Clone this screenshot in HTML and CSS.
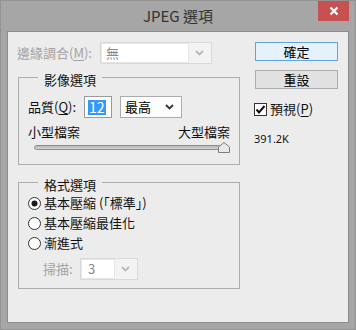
FILE: index.html
```html
<!DOCTYPE html>
<html lang="zh-Hant">
<head>
    <meta charset="UTF-8">
    <title>JPEG 選項</title>
    <link rel="stylesheet" href="styles.css">
</head>
<body>
    <div class="window">
        <div class="titlebar">
            <span class="title">JPEG 選項</span>
            <div class="close">
                <svg width="10" height="10" viewBox="0 0 10 10"><path d="M1.5 1.5 L8.5 8.5 M8.5 1.5 L1.5 8.5" stroke="#fff" stroke-width="2.2"/></svg>
            </div>
        </div>

        <div class="client">
            <!-- columna izquierda -->
            <div class="main">
                <div class="matte-row">
                    <span class="label disabled">邊緣調合(<u>M</u>):</span>
                    <div class="select off matte">
                        <span class="field">無</span>
                        <svg class="chev" width="9" height="6" viewBox="0 0 9 6"><path d="M1 1 L4.5 4.5 L8 1" fill="none" stroke="#b9b9b9" stroke-width="1.8"/></svg>
                    </div>
                </div>

                <fieldset class="group image">
                    <legend>影像選項</legend>
                    <div class="quality-row">
                        <span class="label q-label">品質(<u>Q</u>):</span>
                        <div class="num"><span class="sel">12</span></div>
                        <div class="select on quality">
                            <span class="field">最高</span>
                            <svg class="chev" width="9" height="6" viewBox="0 0 9 6"><path d="M1 1 L4.5 4.5 L8 1" fill="none" stroke="#333" stroke-width="1.8"/></svg>
                        </div>
                    </div>
                    <div class="size-labels">
                        <span>小型檔案</span>
                        <span>大型檔案</span>
                    </div>
                    <div class="slider">
                        <div class="track"></div>
                        <svg class="thumb" width="12" height="11" viewBox="0 0 12 11"><path d="M0.5 10.5 L0.5 5 L6 0.5 L11.5 5 L11.5 10.5 Z" fill="#e8e8e8" stroke="#7d7d7d"/></svg>
                    </div>
                </fieldset>

                <fieldset class="group format">
                    <legend>格式選項</legend>
                    <div class="radio-row">
                        <svg class="radio" width="13" height="13" viewBox="0 0 13 13"><circle cx="6.5" cy="6.5" r="6" fill="#fff" stroke="#333"/><circle cx="6.5" cy="6.5" r="3" fill="#1a1a1a"/></svg>
                        <span>基本壓縮 (「標準」)</span>
                    </div>
                    <div class="radio-row">
                        <svg class="radio" width="13" height="13" viewBox="0 0 13 13"><circle cx="6.5" cy="6.5" r="6" fill="#fff" stroke="#333"/></svg>
                        <span>基本壓縮最佳化</span>
                    </div>
                    <div class="radio-row">
                        <svg class="radio" width="13" height="13" viewBox="0 0 13 13"><circle cx="6.5" cy="6.5" r="6" fill="#fff" stroke="#333"/></svg>
                        <span>漸進式</span>
                    </div>
                    <div class="scan-row">
                        <span class="label disabled scan-label">掃描:</span>
                        <div class="select off scan">
                            <span class="field">3</span>
                            <svg class="chev" width="9" height="6" viewBox="0 0 9 6"><path d="M1 1 L4.5 4.5 L8 1" fill="none" stroke="#b9b9b9" stroke-width="1.8"/></svg>
                        </div>
                    </div>
                </fieldset>
            </div>

            <!-- columna derecha -->
            <div class="side">
                <button class="btn default">確定</button>
                <button class="btn">重設</button>
                <div class="check-row">
                    <svg class="check" width="13" height="13" viewBox="0 0 13 13"><rect x="0.5" y="0.5" width="12" height="12" fill="#fff" stroke="#333"/><path d="M2.5 6.5 L5 9.5 L10.5 3" fill="none" stroke="#111" stroke-width="2"/></svg>
                    <span>預視(<u>P</u>)</span>
                </div>
                <div class="size">391.2K</div>
            </div>
        </div>
    </div>
</body>
</html>
```

FILE: styles.css
```css
body {
    margin: 0;
    font-family: "Noto Sans CJK TC", "Noto Sans", sans-serif;
    font-size: 13px;
    color: #111;
}
.window {
    width: 356px;
    height: 330px;
    box-sizing: border-box;
    border: 1px solid #939393;
    background: #a6a6a6;
    display: flex;
    flex-direction: column;
    position: relative;
}
.titlebar {
    height: 30px;
    display: flex;
    justify-content: center;
    align-items: center;
}
.title {
    font-size: 15px;
    line-height: 18px;
    color: #333;
}
.close {
    position: absolute;
    top: 0;
    right: 6px;
    width: 31px;
    height: 20px;
    background: #c75050;
    display: flex;
    justify-content: center;
    align-items: center;
}
.client {
    flex: 1;
    margin: 0 6px 6px;
    border: 1px solid #8c8c8c;
    background: #ececec;
    display: flex;
}
.main {
    width: 237px;
    padding: 10px 0 0 10px;
}
.label {
    line-height: 16px;
}
.disabled {
    color: #a3a3a3;
}
u {
    text-decoration-thickness: 1px;
    text-underline-offset: 2px;
}

/* combos */
.select {
    box-sizing: border-box;
    height: 22px;
    display: flex;
    align-items: center;
    border: 1px solid #acacac;
}
.select .field {
    flex: 1;
    line-height: 16px;
    padding-left: 4px;
}
.select .chev {
    margin: 0 7px 0 6px;
}
.select.off {
    border-color: #d9d9d9;
    background: #f3f3f3;
    color: #8a8a8a;
    align-items: stretch;
}
.select.off .field {
    background: #fff;
    border: 1px solid #e6e6e6;
    display: flex;
    align-items: center;
}
.select.off .chev {
    align-self: center;
}
.select.on {
    background: #fdfdfd;
}

.matte-row {
    display: flex;
    align-items: center;
    height: 22px;
}
.matte-row .label {
    width: 82px;
    margin-left: -1px;
    margin-right: 1px;
}
.matte {
    width: 112px;
}

/* grupos */
.group {
    margin: 2px 0 0;
    width: 222px;
    box-sizing: border-box;
    border: 1px solid #adadad;
    padding: 8px 9px 11px 9px;
}
.group legend {
    padding: 6px 6px 0;
    margin-left: 10px;
    line-height: 16px;
}
.quality-row {
    display: flex;
    align-items: center;
    height: 22px;
}
.q-label {
    width: 56px;
}
.num {
    box-sizing: border-box;
    width: 28px;
    height: 22px;
    border: 1px solid #9a9a9a;
    background: #fff;
    display: flex;
    align-items: center;
    padding-left: 3px;
    margin-right: 8px;
}
.num .sel {
    background: #3399ff;
    color: #fff;
    line-height: 15px;
    padding: 0 1px;
    font-size: 14px;
}
.quality {
    width: 62px;
    color: #000;
}
.size-labels {
    display: flex;
    justify-content: space-between;
    margin-top: 6px;
    line-height: 16px;
}
.slider {
    display: flex;
    align-items: center;
    height: 12px;
    margin: 1px 0 0 6px;
}
.track {
    flex: 1;
    height: 5px;
    box-sizing: border-box;
    border: 1px solid #8d8d8d;
    border-radius: 3px;
    background: linear-gradient(#b5b5b5, #d6d6d6);
    margin-right: -3px;
}
.thumb {
    display: block;
}

.format {
    margin-top: 6px;
    padding-top: 0;
    padding-bottom: 8px;
}
.radio-row {
    display: flex;
    align-items: center;
    height: 20px;
}
.radio {
    margin-right: 3px;
}
.radio-row span {
    line-height: 16px;
}
.scan-row {
    display: flex;
    align-items: center;
    margin-top: 5px;
    padding-left: 15px;
}
.scan-label {
    width: 37px;
}
.scan {
    width: 58px;
}
.scan .field {
    padding-left: 6px;
}

/* derecha */
.side {
    padding: 10px 0 0 0;
    display: flex;
    flex-direction: column;
    align-items: flex-start;
}
.btn {
    width: 83px;
    height: 19px;
    box-sizing: border-box;
    border: 1px solid #adadad;
    background: #e1e1e1;
    font: inherit;
    line-height: 15px;
    padding: 0;
    color: #000;
    margin-bottom: 9px;
}
.btn.default {
    border-color: #5fa4dd;
    background: #e5f1fb;
}
.check-row {
    display: flex;
    align-items: center;
    margin-top: 3px;
    margin-left: -1px;
    line-height: 16px;
}
.check {
    margin-right: 3px;
}
.size {
    margin-top: 15px;
    margin-left: -1px;
    font-family: "Noto Sans", sans-serif;
    font-size: 11px;
    line-height: 14px;
}
```
